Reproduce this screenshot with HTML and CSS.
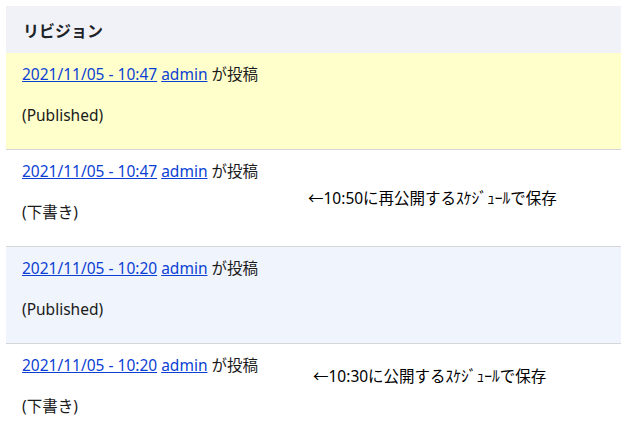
FILE: index.html
```html
<!DOCTYPE html>
<html lang="ja">
<head>
    <meta charset="UTF-8">
    <meta name="viewport" content="width=device-width, initial-scale=1.0">
    <title>リビジョン</title>
    <link rel="stylesheet" href="styles.css">
</head>
<body>
    <div class="revisions">
        <h2 class="rev-title">リビジョン</h2>

        <div class="rev-row rev-current">
            <div class="rev-info">
                <p><a href="#">2021/11/05 - 10:47</a> <a href="#">admin</a> が投稿</p>
                <p>(Published)</p>
            </div>
        </div>

        <div class="rev-row">
            <div class="rev-info">
                <p><a href="#">2021/11/05 - 10:47</a> <a href="#">admin</a> が投稿</p>
                <p>(下書き)</p>
            </div>
            <div class="rev-note note-low">←10:50に再公開するｽｹｼﾞｭｰﾙで保存</div>
        </div>

        <div class="rev-row rev-alt">
            <div class="rev-info">
                <p><a href="#">2021/11/05 - 10:20</a> <a href="#">admin</a> が投稿</p>
                <p>(Published)</p>
            </div>
        </div>

        <div class="rev-row">
            <div class="rev-info">
                <p><a href="#">2021/11/05 - 10:20</a> <a href="#">admin</a> が投稿</p>
                <p>(下書き)</p>
            </div>
            <div class="rev-note note-high">←10:30に公開するｽｹｼﾞｭｰﾙで保存</div>
        </div>
    </div>
</body>
</html>
```

FILE: styles.css
```css
* {
    margin: 0;
    padding: 0;
    box-sizing: border-box;
}

body {
    background-color: white;
    font-family: "Noto Sans", "Noto Sans CJK JP", sans-serif;
    font-size: 15.5px;
    color: #1a1a1a;
    padding: 6px 0 0 6px;
}

.revisions {
    width: 615px;
}

.rev-title {
    background-color: #f1f2f7;
    font-size: 16px;
    font-weight: bold;
    color: #1d2327;
    height: 47px;
    line-height: 44px;
    padding: 3px 0 0 17px;
}

.rev-row {
    display: flex;
    height: 97px;
    padding: 11px 16px 0;
    border-bottom: 1px solid #d6d6d9;
}

.rev-current {
    background-color: #ffffcc;
}

.rev-alt {
    background-color: #f0f4fc;
}

.rev-info {
    width: 270px;
    flex-shrink: 0;
}

.rev-info p {
    line-height: 21px;
}

.rev-info p + p {
    margin-top: 20px;
}

.rev-info a {
    color: #0b3fd4;
    text-decoration: underline;
}

.rev-note {
    color: black;
    white-space: nowrap;
}

.note-low {
    margin: 25px 0 0 16px;
}

.note-high {
    margin: 9px 0 0 21px;
}
```
